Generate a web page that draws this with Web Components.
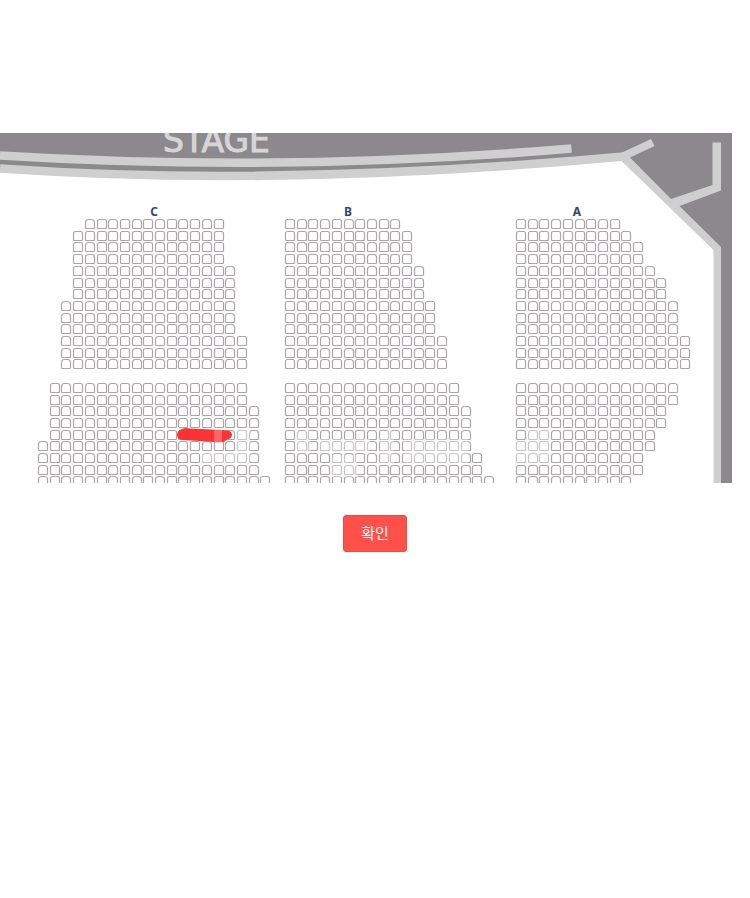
<!DOCTYPE html>
<html lang="ko">
<head>
<meta charset="utf-8">
<meta name="viewport" content="width=device-width, initial-scale=1">
<title>좌석 위치</title>
<style>
  body {
    margin: 0;
    background: #fff;
    font-family: "Liberation Sans", "Noto Sans CJK KR", sans-serif;
  }
</style>
</head>
<body>
<seat-dialog>
  <seat-map></seat-map>
  <confirm-button slot="actions">확인</confirm-button>
</seat-dialog>

<script>
// Distance between two seats, both directions
const PITCH = 11.7;
const FIRST_ROW_Y = 86;

// rows: [row index, first column, last column], row 13 is the aisle
const BLOCKS = [
  {
    name: 'C', x: 38, labelX: 154,
    rows: [
      [0, 4, 15], [1, 3, 15], [2, 3, 15], [3, 3, 15], [4, 3, 16], [5, 3, 16], [6, 3, 16],
      [7, 2, 16], [8, 2, 16], [9, 2, 16], [10, 2, 17], [11, 2, 17], [12, 2, 17],
      [14, 1, 17], [15, 1, 17], [16, 1, 18], [17, 1, 18], [18, 1, 18],
      [19, 0, 18], [20, 0, 18], [21, 0, 18], [22, 0, 19]
    ]
  },
  {
    name: 'B', x: 285, labelX: 348,
    rows: [
      [0, 0, 9], [1, 0, 10], [2, 0, 10], [3, 0, 10], [4, 0, 11], [5, 0, 11], [6, 0, 11],
      [7, 0, 12], [8, 0, 12], [9, 0, 12], [10, 0, 13], [11, 0, 13], [12, 0, 13],
      [14, 0, 14], [15, 0, 14], [16, 0, 15], [17, 0, 15], [18, 0, 15],
      [19, 0, 15], [20, 0, 16], [21, 0, 16], [22, 0, 17]
    ]
  },
  {
    name: 'A', x: 516, labelX: 577,
    rows: [
      [0, 0, 8], [1, 0, 9], [2, 0, 10], [3, 0, 10], [4, 0, 11], [5, 0, 12], [6, 0, 12],
      [7, 0, 13], [8, 0, 13], [9, 0, 13], [10, 0, 14], [11, 0, 14], [12, 0, 14],
      [14, 0, 13], [15, 0, 13], [16, 0, 12], [17, 0, 12], [18, 0, 11],
      [19, 0, 11], [20, 0, 10], [21, 0, 10], [22, 0, 9]
    ]
  }
];

class SeatMap extends HTMLElement {
  constructor() {
    super();
    this.attachShadow({ mode: 'open' });
  }

  connectedCallback() {
    this.render();
  }

  // One seat, 9 by 9: rounded back at the top, flat front
  seatPath(x, y, r) {
    return `M${x} ${y + r}q0-${r} ${r}-${r}h${9 - 2 * r}q${r} 0 ${r} ${r}v${8 - r}q0 1-1 1h-7q-1 0-1-1z`;
  }

  blockPath(block) {
    let d = '';
    for (const [row, from, to] of block.rows) {
      const y = Math.round(FIRST_ROW_Y + row * PITCH) + 0.5;
      for (let col = from; col <= to; col++) {
        const x = Math.round(block.x + col * PITCH) + 0.5;
        // the backs alternate between round and nearly square
        const round = (col % 2 === 0) === (block.name === 'C');
        d += this.seatPath(x, y, round && row !== 1 ? 3 : 2);
      }
    }
    return d;
  }

  render() {
    this.shadowRoot.innerHTML = `
      <style>
        :host {
          display: block;
        }

        svg {
          display: block;
          width: 100%;
          height: auto;
        }

        .hall {
          fill: #8b898c;
        }

        .wall {
          fill: #cfcfcf;
        }

        .rail {
          fill: none;
          stroke: #cfcfcf;
          stroke-width: 8.6;
        }

        .seats {
          fill: #fff;
          stroke: #aaa5a9;
          stroke-width: 1.2;
        }

        .stage {
          fill: #d6d6d6;
          stroke: #d6d6d6;
          stroke-width: 1;
          font: 33px "DejaVu Sans", sans-serif;
        }

        .label {
          fill: #34466f;
          font: bold 12px "Noto Sans", sans-serif;
          text-anchor: middle;
        }
      </style>

      <svg viewBox="0 0 732 350" role="img" aria-label="STAGE, C, B, A">
        <rect class="hall" width="732" height="350"/>
        <path fill="#fff" d="M0 36Q280 55 621 24L714 117V350H0z"/>
        <path class="rail" d="M0 35.500Q280 55 624 23.500"/>
        <path class="rail" d="M0 22.500Q285 40 571.500 15.500"/>
        <path class="wall" d="M621 20L651 6L654.500 13L630 24.500L671 66L712.500 52V9.500H721V57.500L679.500 73L721 114V350H713.500V117L621 27.500z"/>
        <text class="stage" x="163" y="19">STAGE</text>
        ${BLOCKS.map(block => `
          <text class="label" x="${block.labelX}" y="83">${block.name}</text>
          <path class="seats" d="${this.blockPath(block)}"/>
        `).join('')}

        <!-- worn patches -->
        <g fill="#fff" opacity="0.35">
          <path d="M201 320h49v12h-49zM236 296h14v24h-14z"/>
          <path d="M297 298h14v22h-14zM320 306h50v12h-50zM332 322h26v22h-26zM380 298h14v34h-14zM404 306h64v24h-64z"/>
          <path d="M516 308h34v22h-34zM528 296h22v12h-22z"/>
        </g>

        <!-- marker over the chosen seats -->
        <path fill="#fd3233" d="M182 296Q185 294.500 190 295.500L222 297L228 297.500Q232 298.500 232 302Q231.500 306 227 306.500L224 309Q216 309.500 208 308.500L182 307Q177 306 177 301.500Q177.500 297 182 296z"/>
        <path fill="#fff" opacity="0.25" d="M214 297h8v12h-8z"/>
      </svg>
    `;
  }
}

class ConfirmButton extends HTMLElement {
  constructor() {
    super();
    this.attachShadow({ mode: 'open' }).innerHTML = `
      <style>
        :host {
          display: inline-block;
        }

        button {
          display: block;
          padding: 0 17px 2px;
          border: 1px solid #ee4a43;
          border-radius: 3px;
          background: #ff5149;
          color: #fff;
          font-family: "Noto Sans CJK KR", sans-serif;
          font-size: 15px;
          line-height: 33px;
          cursor: pointer;
        }
      </style>
      <button type="button"><slot></slot></button>
    `;
  }
}

class SeatDialog extends HTMLElement {
  constructor() {
    super();
    this.attachShadow({ mode: 'open' }).innerHTML = `
      <style>
        :host {
          display: block;
        }

        main {
          display: flex;
          flex-direction: column;
          gap: 32px;
          padding-top: 133px;
        }

        .content {
          margin-right: 18px;
        }

        .actions {
          display: flex;
          justify-content: center;
        }
      </style>
      <main>
        <div class="content"><slot></slot></div>
        <div class="actions"><slot name="actions"></slot></div>
      </main>
    `;
  }
}

customElements.define('seat-map', SeatMap);
customElements.define('confirm-button', ConfirmButton);
customElements.define('seat-dialog', SeatDialog);
</script>
</body>
</html>
